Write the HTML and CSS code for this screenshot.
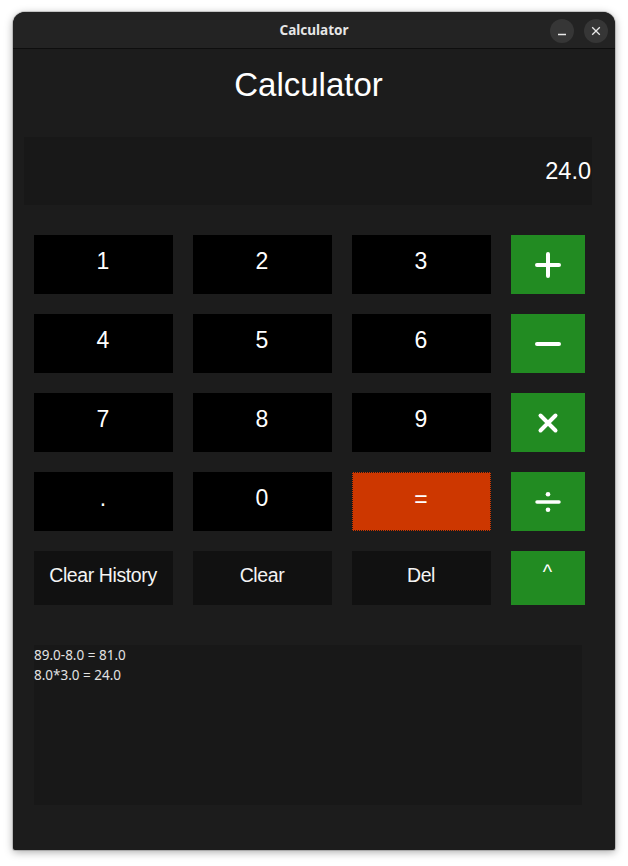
FILE: index.html
```html
<!DOCTYPE html>
<html>
<head>
<meta charset="utf-8">
<link rel="stylesheet" href="styles.css">
</head>
<body>
<div class="window">
  <div class="titlebar">
    <span></span>
    <span class="wtitle">Calculator</span>
    <div class="wbtns">
      <span class="wbtn"><svg width="10" height="10" viewBox="0 0 10 10"><path d="M1 8.5H9" stroke="#e8e8e8" stroke-width="1.3"/></svg></span>
      <span class="wbtn"><svg width="10" height="10" viewBox="0 0 10 10"><path d="M1.2 1.2L8.8 8.8M8.8 1.2L1.2 8.8" stroke="#e8e8e8" stroke-width="1.3"/></svg></span>
    </div>
  </div>
  <div class="content">
    <h1 class="heading">Calculator</h1>
    <div class="display">24.0</div>
    <div class="keys">
      <div class="key num">1</div>
      <div class="key num">2</div>
      <div class="key num">3</div>
      <div class="key op"><svg width="26" height="26" viewBox="0 0 26 26"><path d="M13 2V24M2 13H24" stroke="#fff" stroke-width="4" stroke-linecap="round"/></svg></div>
      <div class="key num">4</div>
      <div class="key num">5</div>
      <div class="key num">6</div>
      <div class="key op"><svg width="26" height="26" viewBox="0 0 26 26"><path d="M2 13H24" stroke="#fff" stroke-width="4" stroke-linecap="round"/></svg></div>
      <div class="key num">7</div>
      <div class="key num">8</div>
      <div class="key num">9</div>
      <div class="key op"><svg width="26" height="26" viewBox="0 0 26 26"><path d="M5.5 5.5L20.5 20.5M20.5 5.5L5.5 20.5" stroke="#fff" stroke-width="4" stroke-linecap="round"/></svg></div>
      <div class="key num">.</div>
      <div class="key num">0</div>
      <div class="key eq">=</div>
      <div class="key op"><svg width="26" height="26" viewBox="0 0 26 26"><path d="M2 13H24" stroke="#fff" stroke-width="3.5" stroke-linecap="round"/><circle cx="13" cy="5.3" r="2.3" fill="#fff"/><circle cx="13" cy="20.7" r="2.3" fill="#fff"/></svg></div>
      <div class="key fn">Clear History</div>
      <div class="key fn">Clear</div>
      <div class="key fn">Del</div>
      <div class="key op caret">^</div>
    </div>
    <div class="history">
      <div>89.0-8.0 = 81.0</div>
      <div>8.0*3.0 = 24.0</div>
    </div>
  </div>
</div>
</body>
</html>
```

FILE: styles.css
```css
html, body {
  margin: 0;
  padding: 0;
  background: #ffffff;
}
body {
  width: 628px;
  height: 866px;
  overflow: hidden;
  padding-top: 12px;
  padding-left: 13px;
  box-sizing: border-box;
}
.window {
  width: 602px;
  height: 838px;
  background: #1c1c1c;
  border-radius: 12px 12px 2px 2px;
  box-shadow: 0 2px 8px rgba(0,0,0,0.35), 0 0 0 1px rgba(0,0,0,0.15);
  overflow: hidden;
  font-family: "Liberation Sans", Arial, sans-serif;
  color: #ffffff;
}
.titlebar {
  height: 36px;
  background: #232323;
  border-bottom: 1px solid #0e0e0e;
  display: grid;
  grid-template-columns: 1fr auto 1fr;
  align-items: center;
}
.wtitle {
  font-family: "Noto Sans", "DejaVu Sans", sans-serif;
  font-weight: 700;
  font-size: 13.5px;
  color: #e6e6e6;
  padding-bottom: 1px;
}
.wbtns {
  justify-self: end;
  display: flex;
  gap: 10px;
  padding-right: 7px;
  padding-top: 1px;
}
.wbtn {
  width: 24px;
  height: 24px;
  border-radius: 50%;
  background: #363636;
  display: flex;
  align-items: center;
  justify-content: center;
}
.content {
  padding: 0 23px 0 11px;
}
.heading {
  margin: 0;
  padding-top: 17px;
  height: 38px;
  line-height: 38px;
  font-size: 33px;
  font-weight: 400;
  text-align: center;
  margin-bottom: 33px;
  padding-left: 1px;
}
.display {
  height: 68px;
  background: #181818;
  display: flex;
  align-items: center;
  justify-content: flex-end;
  padding: 0 1px 0 0;
  box-sizing: border-box;
  font-size: 23.5px;
}
.keys {
  margin: 30px 0 0 10px;
  display: grid;
  grid-template-columns: 139px 139px 139px 74px;
  grid-template-rows: 59px 59px 59px 59px 54px;
  gap: 20px;
}
.key {
  display: flex;
  align-items: center;
  justify-content: center;
  box-sizing: border-box;
}
.num {
  background: #000000;
  font-size: 23px;
  padding: 0 1px 7px 0;
}
.op {
  background: #228b22;
}
.eq {
  background: #cd3700;
  border: 1px dotted #1a1a1a;
  font-size: 23px;
  padding: 0 1px 5px 0;
}
.fn {
  background: #111111;
  font-size: 19.5px;
  letter-spacing: -0.4px;
  color: #f4f4f4;
  padding: 0 1px 5px 0;
}
.caret {
  font-size: 20px;
  padding: 0 1px 12px 0;
}
.history {
  margin: 40px 0 0 10px;
  width: 548px;
  height: 160px;
  background: #181818;
  font-family: "Noto Sans", "DejaVu Sans", sans-serif;
  font-size: 13.5px;
  line-height: 20px;
  color: #e2e2e2;
}
```
